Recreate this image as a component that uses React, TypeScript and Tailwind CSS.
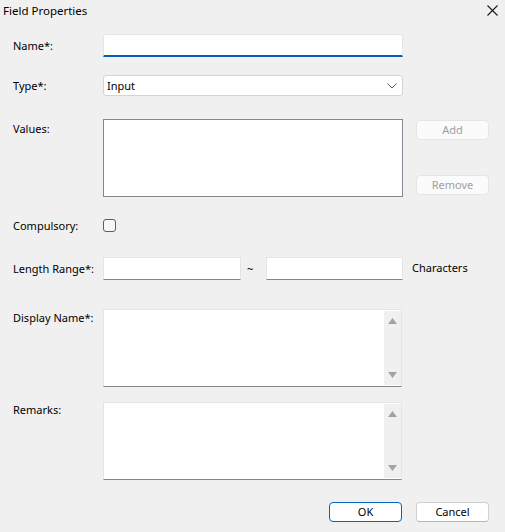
import React from "react";

const font = { fontFamily: '"Noto Sans", "Liberation Sans", sans-serif' };

function Label({ children, className = "" }: { children: React.ReactNode; className?: string }) {
  return <div className={"w-[103px] shrink-0 whitespace-nowrap pl-[13px] leading-[16px] " + className}>{children}</div>;
}

function ScrollBox() {
  return (
    <div className="flex h-[78px] w-[299px] border-x border-t border-x-[#e5e5e5] border-t-[#e5e5e5] border-b border-b-[#868686] bg-white">
      <div className="flex-1" />
      <div className="my-[1px] flex w-[17px] flex-col items-center justify-between bg-[#f0f0f0] py-[7px]">
        <svg width="9" height="6" viewBox="0 0 9 6">
          <polygon points="4.5,0 9,6 0,6" fill="#a3a3a3" />
        </svg>
        <svg width="9" height="6" viewBox="0 0 9 6">
          <polygon points="0,0 9,0 4.5,6" fill="#a3a3a3" />
        </svg>
      </div>
    </div>
  );
}

export default function App() {
  return (
    <div style={font} className="flex h-[532px] w-[505px] flex-col bg-[#f0f0f0] text-[11px] text-black">
      {/* Title bar */}
      <div className="flex h-[22px] items-center justify-between pl-[3px] pr-[7px]">
        <span className="text-[11.5px]">Field Properties</span>
        <svg width="11" height="11" viewBox="0 0 11 11" className="mt-[-1px]">
          <path d="M0.5 0.5 L10.5 10.5 M10.5 0.5 L0.5 10.5" stroke="#1a1a1a" strokeWidth="1.1" />
        </svg>
      </div>

      {/* Name */}
      <div className="mt-[12px] flex h-[23px] items-center">
        <Label>Name*:</Label>
        <div className="h-[23px] w-[300px] rounded-t-[2px] border-x border-t border-[#e5e5e5] border-b-2 border-b-[#005fb8] bg-white" />
      </div>

      {/* Type */}
      <div className="mt-[18px] flex h-[21px] items-center">
        <Label>Type*:</Label>
        <div className="flex h-[21px] w-[300px] items-center justify-between rounded-[3px] border border-[#d4d4d4] bg-white pl-[3px] pr-[5px]">
          <span className="leading-[16px]">Input</span>
          <svg width="10" height="6" viewBox="0 0 10 6">
            <path d="M0.5 0.5 L5 5 L9.5 0.5" fill="none" stroke="#5f5f5f" strokeWidth="1" />
          </svg>
        </div>
      </div>

      {/* Values */}
      <div className="mt-[23px] flex h-[78px] items-start">
        <Label className="pt-[2px]">Values:</Label>
        <div className="h-[78px] w-[300px] border border-[#828790] bg-white" />
        <div className="ml-[13px] flex h-[78px] flex-col justify-between pb-[2px] pt-[1px]">
          <div className="flex h-[20px] w-[73px] items-center justify-center rounded-[4px] border border-[#e5e5e5] bg-[#fbfbfb] text-[#a0a0a0]">
            Add
          </div>
          <div className="flex h-[20px] w-[73px] items-center justify-center rounded-[4px] border border-[#e5e5e5] bg-[#fbfbfb] text-[#a0a0a0]">
            Remove
          </div>
        </div>
      </div>

      {/* Compulsory */}
      <div className="mt-[22px] flex h-[13px] items-center">
        <Label>Compulsory:</Label>
        <div className="h-[13px] w-[13px] rounded-[3px] border border-[#5f5f5f] bg-[#f7f7f7]" />
      </div>

      {/* Length Range */}
      <div className="mt-[25px] flex h-[23px] items-center">
        <Label>Length Range*:</Label>
        <div className="h-[23px] w-[138px] border-x border-t border-[#e5e5e5] border-b border-b-[#868686] bg-white" />
        <div className="w-[25px] pl-[6px] pt-[2px]">~</div>
        <div className="h-[23px] w-[137px] border-x border-t border-[#e5e5e5] border-b border-b-[#868686] bg-white" />
        <div className="ml-[9px]">Characters</div>
      </div>

      {/* Display Name */}
      <div className="mt-[29px] flex items-start">
        <Label className="pt-[1px]">Display Name*:</Label>
        <ScrollBox />
      </div>

      {/* Remarks */}
      <div className="mt-[15px] flex items-start">
        <Label className="pt-[0px]">Remarks:</Label>
        <ScrollBox />
      </div>

      {/* Buttons */}
      <div className="mt-[22px] flex h-[20px] justify-end gap-[14px] pr-[16px]">
        <div className="flex h-[20px] w-[73px] items-center justify-center rounded-[4px] border border-[#0067c0] bg-white">
          OK
        </div>
        <div className="flex h-[20px] w-[73px] items-center justify-center rounded-[4px] border border-[#d0d0d0] border-b-[#b8b8b8] bg-white">
          Cancel
        </div>
      </div>
    </div>
  );
}
